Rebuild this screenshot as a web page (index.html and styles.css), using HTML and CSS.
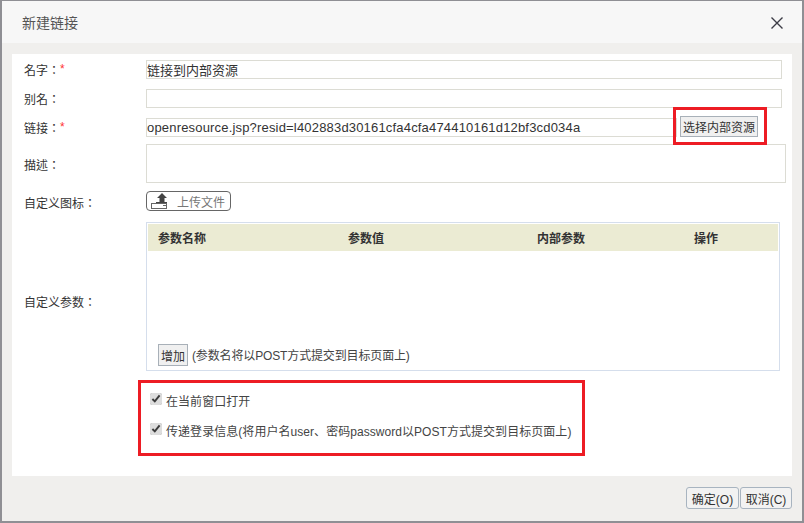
FILE: index.html
```html
<!DOCTYPE html>
<html lang="zh">
<head>
<meta charset="utf-8">
<title>新建链接</title>
<link rel="stylesheet" href="styles.css">
</head>
<body>
<div class="dialog">
  <header class="titlebar">
    <span class="title">新建链接</span>
    <svg class="close" width="14" height="14" viewBox="0 0 14 14"><path d="M1.5 1.5 12.5 12.5M12.5 1.5 1.5 12.5" stroke="#3c3c46" stroke-width="1.4" fill="none"/></svg>
  </header>
  <main class="content">
    <div class="row row-name">
      <label class="label" lang="zh-Hant">名字：<span class="req">*</span></label>
      <input class="field field-wide" value="链接到内部资源">
    </div>
    <div class="row row-alias">
      <label class="label" lang="zh-Hant">别名：</label>
      <input class="field field-wide">
    </div>
    <div class="row row-link">
      <label class="label" lang="zh-Hant">链接：<span class="req">*</span></label>
      <input class="field field-link" value="openresource.jsp?resid=l402883d30161cfa4cfa474410161d12bf3cd034a">
      <span class="pick-wrap"><button class="pick">选择内部资源</button><span class="mark-btn"></span></span>
    </div>
    <div class="row row-desc">
      <label class="label" lang="zh-Hant">描述：</label>
      <div class="area"></div>
    </div>
    <div class="row row-icon">
      <label class="label" lang="zh-Hant">自定义图标：</label>
      <button class="upload">
        <svg width="16" height="16" viewBox="0 0 16 16"><path d="M11 0 16 5H13.500V9H8.500V5H6Z" fill="#444"/><rect x="5" y="9" width="11" height="1" fill="#444"/><rect x=".5" y="10.500" width="15" height="5" fill="#fff" stroke="#666"/><rect x="12" y="12" width="3" height="1" fill="#666"/></svg>
        <span>上传文件</span>
      </button>
    </div>
    <div class="row row-params">
      <label class="label" lang="zh-Hant">自定义参数：</label>
      <div class="params">
        <div class="thead">
          <span class="th th1">参数名称</span>
          <span class="th th2">参数值</span>
          <span class="th th3">内部参数</span>
          <span class="th">操作</span>
        </div>
        <div class="tfoot">
          <button class="add">增加</button>
          <span class="hint">(参数名将以POST方式提交到目标页面上)</span>
        </div>
      </div>
    </div>
    <div class="checks">
      <label class="check"><input type="checkbox" checked><span>在当前窗口打开</span></label>
      <label class="check"><input type="checkbox" checked><span>传递登录信息(将用户名user、密码password以POST方式提交到目标页面上)</span></label>
    </div>
  </main>
  <footer class="actions">
    <button class="act">确定(O)</button>
    <button class="act">取消(C)</button>
  </footer>
</div>
</body>
</html>
```
FILE: styles.css
```css
* { box-sizing: border-box; }
html, body { margin: 0; height: 100%; }
body {
  background: #8f8f94;
  padding: 1px 2px 2px;
  font-family: "Liberation Sans", "Noto Sans CJK SC", sans-serif;
  font-size: 12px;
  color: #333;
  overflow: hidden;
}
.dialog {
  width: 800px;
  height: 520px;
  background: #f0efed;
  display: flex;
  flex-direction: column;
}
.titlebar {
  height: 42px;
  flex: none;
  background: #f7f7f7;
  display: flex;
  align-items: center;
  justify-content: space-between;
  padding: 0 18px 0 20px;
}
.title { font-size: 14px; color: #555; }
.close { display: block; margin-top: 2px; }
.content {
  margin: 11px 10px 0;
  height: 422px;
  background: #fff;
  position: relative;
  padding-top: 6px;
  display: flex;
  flex-direction: column;
}
.row { display: flex; align-items: center; }
.label {
  width: 134px;
  flex: none;
  padding-left: 12px;
  color: #333;
  font-family: "Liberation Sans", "Noto Sans CJK TC", sans-serif;
}
.req { color: #f33; position: relative; top: -2px; }
.row-desc .label { padding-top: 2px; }
.row-icon .label { padding-top: 2px; }
.row-params .label { padding-top: 9px; }
.field {
  height: 19px;
  border: 1px solid #dcdcd4;
  padding: 0;
  font-family: inherit;
  font-size: 13px;
  color: #333;
  outline: none;
  background: #fff;
}
.field-wide { width: 636px; }
.field-link { width: 531px; letter-spacing: .18px; }
.row-alias { margin-top: 10px; }
.row-link { margin-top: 9px; height: 21px; align-items: flex-start; }
.row-link .field { margin-top: 1px; }
.row-link .label { padding-top: 2px; }
.pick-wrap { position: relative; margin-left: 3px; display: block; margin-top: -1px; }
.pick {
  display: block;
  width: 78px;
  height: 21px;
  padding: 0;
  font-family: inherit;
  font-size: 12px;
  color: #333;
  background: #f0f0f0;
  border: 1px solid #a8b0b8;
}
.mark-btn {
  position: absolute;
  left: -7px;
  top: -9px;
  width: 94px;
  height: 38px;
  border: 3px solid #ed1c24;
}
.row-desc { margin-top: 6px; }
.area { width: 640px; height: 39px; border: 1px solid #dcdcd4; background: #fff; }
.row-icon { margin-top: 8px; }
.upload {
  width: 85px;
  height: 20px;
  padding: 0 0 0 4px;
  display: flex;
  align-items: center;
  gap: 10px;
  background: #fff;
  border: 1px solid #666;
  border-radius: 4px;
  font-family: inherit;
  font-size: 12px;
  color: #777;
}
.row-params { margin-top: 11px; }
.params {
  width: 634px;
  height: 149px;
  border: 1px solid #d5deec;
  padding: 1px;
  display: flex;
  flex-direction: column;
  justify-content: space-between;
}
.thead {
  height: 27px;
  background: #ebebd3;
  display: flex;
  align-items: center;
  padding-left: 10px;
}
.th { font-weight: bold; color: #333; }
.th1 { width: 190px; }
.th2 { width: 189px; }
.th3 { width: 157px; }
.tfoot { display: flex; align-items: center; padding: 0 0 3px 10px; gap: 4px; }
.add {
  width: 30px;
  height: 22px;
  padding: 0;
  font-family: inherit;
  font-size: 12px;
  color: #333;
  background: #f0f0f0;
  border: 1px solid #a8b0b8;
}
.hint { color: #444; letter-spacing: -.14px; margin-top: -2px; }
.checks {
  margin: 9px 0 0 126px;
  width: 447px;
  height: 76px;
  border: 3px solid #ed1c24;
  padding: 10px 0 0 9px;
  display: flex;
  flex-direction: column;
  gap: 13px;
}
.check { display: flex; align-items: flex-start; height: 17px; color: #444; letter-spacing: .05px; }
.check span { margin-top: -1px; }
.check input { width: 12px; height: 12px; margin: 0 4px 0 0; accent-color: #ddd; }
.actions {
  flex: 1;
  display: flex;
  justify-content: flex-end;
  gap: 1px;
  padding: 11px 10px 0 0;
}
.act {
  width: 52px;
  height: 22px;
  padding: 0;
  font-family: inherit;
  font-size: 12px;
  color: #333;
  background: #f2f2f2;
  border: 1px solid #a8b4c0;
  border-radius: 3px;
}
.act:first-child { width: 53px; }
```
